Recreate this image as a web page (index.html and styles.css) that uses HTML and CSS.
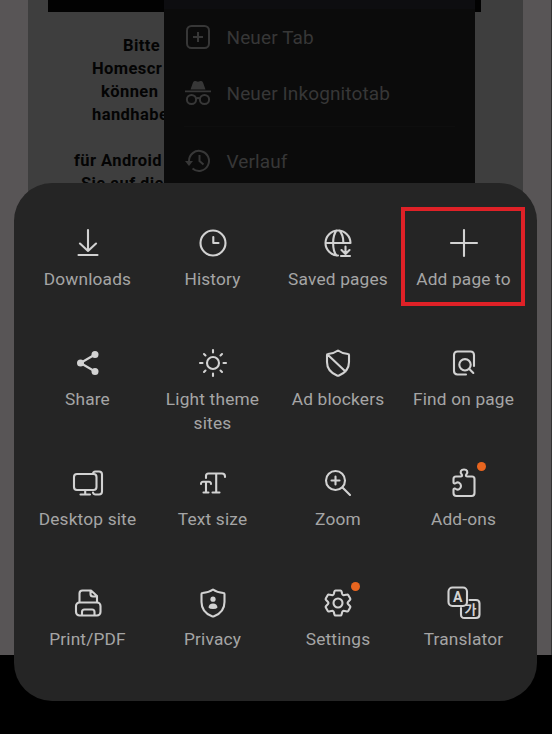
FILE: index.html
```html
<!DOCTYPE html>
<html lang="en">
<head>
<meta charset="utf-8">
<title>Browser menu</title>
<link rel="stylesheet" href="styles.css">
</head>
<body>
<div class="screen">
  <div class="backdrop">
    <div class="page">
      <div class="page-bar"></div>
      <div class="page-text">
        <p class="line-a">Bitte</p>
        <p class="line-b">Homescr</p>
        <p class="line-c">können</p>
        <p class="line-b">handhabe</p>
        <p class="line-d">für Android</p>
        <p class="line-e">Sie auf die</p>
      </div>
      <div class="popup">
        <div class="popup-head"></div>
        <div class="popup-row"><svg viewBox="0 0 28 28"><rect x="3" y="3" width="22" height="22" rx="4.500"/><path d="M14 9v10M9 14h10"/></svg>Neuer Tab</div>
        <div class="popup-row"><svg viewBox="0 0 28 28"><path class="solid" d="M6.500 10.500 9 3.500Q9.500 1.500 11.500 2L14 2.700 16.500 2Q18.500 1.500 19 3.500L21.500 10.500zM1 11.500h26v1.800H1z"/><circle cx="7.500" cy="20.500" r="4.600"/><circle cx="20.500" cy="20.500" r="4.600"/><path d="M12 19.500q2-1 4 0"/></svg>Neuer Inkognitotab</div>
        <div class="popup-row ruled"><svg viewBox="0 0 28 28"><path d="M5 14a10 10 0 1 1 3.500 7.500M15.500 8v6l4 3.500"/><path class="solid" d="M1 14h8l-4 5z"/></svg>Verlauf</div>
      </div>
    </div>
  </div>
  <main class="sheet">
    <div class="item"><svg class="icon" viewBox="-18 -18 36 36"><path d="M0-13V8M-8 .5 0 8 8 .5M-9.500 12H9.500"/></svg><span>Downloads</span></div>
    <div class="item"><svg class="icon" viewBox="-18 -18 36 36"><circle r="12.500"/><path d="M.3-6V0H5.500"/></svg><span>History</span></div>
    <div class="item"><svg class="icon" viewBox="-18 -18 36 36"><path d="M12.500 0A12.500 12.500 0 1 0 0 12.500M-12.500 0H12.500M-1.500-12.500C-6-7-6 7-1.500 12.500M1.500-12.500C4.500-9 5.500-5 5.300 0"/><path d="M7.500 3.500V11M3.500 7l4 4 4-4M3 13h9"/></svg><span>Saved pages</span></div>
    <div class="item"><i class="mark"></i><svg class="icon" viewBox="-18 -18 36 36"><path d="M0-13V13M-13 0H13"/></svg><span>Add page to</span></div>

    <div class="item"><svg class="icon" viewBox="-18 -18 36 36"><path d="M7-8.500-7.500 0 7 8.500"/><g class="solid"><circle cx="7" cy="-8.500" r="3.500"/><circle cx="-7.500" r="3.500"/><circle cx="7" cy="8.500" r="3.500"/></g></svg><span>Share</span></div>
    <div class="item"><svg class="icon" viewBox="-18 -18 36 36"><circle r="6"/><path d="M0-13v2.500M0 10.500V13M-13 0h2.500M10.500 0H13M-9-9l1.500 1.500M7.500 7.500 9 9M-9 9l1.500-1.500M7.500-7.500 9-9"/></svg><span>Light theme sites</span></div>
    <div class="item"><svg class="icon" viewBox="-18 -18 36 36"><path d="M0-12.500Q4-9.500 10-9Q11-9 11-8V-1C11 6 7 10 1 12.500Q0 13-1 12.500C-7 10-11 6-11-1V-8Q-11-9-10-9Q-4-9.500 0-12.500ZM-10-8 7.500 8.500"/></svg><span>Ad blockers</span></div>
    <div class="item"><svg class="icon" viewBox="-18 -18 36 36"><path d="M2 11.500H-6.500Q-10 11.500-10 8V-8Q-10-11.500-6.500-11.500H6.500Q10-11.500 10-8V3"/><circle cx="1" cy="1.800" r="5.700"/><path d="m5.300 6 4 4"/></svg><span>Find on page</span></div>

    <div class="item"><svg class="icon" viewBox="-18 -18 36 36"><rect x="-14" y="-9" width="22.500" height="16" rx="3"/><path d="M-2.800 7v4.500M-7.500 11.500H2M5-9Q5-11.500 7.500-11.500H11Q14-11.500 14-8.500V8.500Q14 11.500 11 11.500H7.500Q5.500 11.500 5 9.500"/></svg><span>Desktop site</span></div>
    <div class="item"><svg class="icon" viewBox="-18 -18 36 36"><path d="M-7-5V-7Q-7-9.500-4.500-9.500H9Q12-9.500 12-6.500V-6M3.200-9.500V9.500M-.5 9.500H6.500M-12 1Q-12-1.200-10-1.200H-4Q-2-1.200-2 1M-7-1V9.500M-9.500 9.500h5"/></svg><span>Text size</span></div>
    <div class="item"><svg class="icon" viewBox="-18 -18 36 36"><circle cx="-2.500" cy="-2.500" r="9.500"/><path d="M4.500 4.500 12 12M-2.500-6.500v8M-6.500-2.500h8"/></svg><span>Zoom</span></div>
    <div class="item"><svg class="icon" viewBox="-18 -18 36 36"><path d="M-8-6.500H-3.500C-2-6.500-1.500-7.500-2.300-8.500C-4.500-11-3-13.500 0-13.500S4.500-11 2.300-8.500C1.500-7.500 2-6.500 3.500-6.500H8Q10.500-6.500 10.500-4V10Q10.500 13 7.500 13H-7.500Q-10.500 13-10.500 10V6.500C-10.500 5.500-9 5.200-8 6C-6 7.500-3 6-3 3S-6-1.500-8 0C-9 .8-10.500.5-10.500-.5V-4Q-10.500-6.500-8-6.500Z"/></svg><i class="dot"></i><span>Add-ons</span></div>

    <div class="item"><svg class="icon" viewBox="-18 -18 36 36"><path d="M-8.500-1V-9.500Q-8.500-12.500-5.500-12.500H3L9-7V-1M2.500-12V-9Q2.500-6.500 5-6.500H9"/><rect x="-12" y="-.5" width="24.500" height="13" rx="3.500"/><path d="M-6 12V9Q-6 6.500-3.500 6.500H4Q6.500 6.500 6.500 9V12"/></svg><span>Print/PDF</span></div>
    <div class="item"><svg class="icon" viewBox="-18 -18 36 36"><path d="M0-13.500Q4-10.500 10.500-10Q11.500-10 11.500-9V-1C11.500 6.500 7 11 1 13.300Q0 13.700-1 13.300C-7 11-11.500 6.500-11.500-1V-9Q-11.500-10-10.500-10Q-4-10.500 0-13.500Z"/><circle class="solid" cy="-3.800" r="2.600"/><path class="solid" d="M-4.500 4.500Q-4 .5 0 .5T4.500 4.500Q3.500 6 0 6T-4.500 4.500Z"/></svg><span>Privacy</span></div>
    <div class="item"><svg class="icon" viewBox="-18 -18 36 36"><path d="M-2.500-12.500H2.500Q3.300-12.500 3.500-11.700L4.200-9Q4.500-8 5.600-7.800L9.100-8.500Q9.800-8.700 10.200-8L12.200-4.500Q12.600-3.800 12.100-3.200L9.800-.8Q9.300 0 9.800.8L12.100 3.200Q12.600 3.800 12.200 4.500L10.200 8Q9.800 8.700 9.100 8.500L5.600 7.800Q4.500 8 4.200 9L3.500 11.700Q3.300 12.500 2.500 12.500H-2.500Q-3.300 12.500-3.500 11.700L-4.200 9Q-4.500 8-5.600 7.800L-9.100 8.500Q-9.800 8.700-10.200 8L-12.200 4.500Q-12.600 3.800-12.100 3.200L-9.800.8Q-9.300 0-9.800-.8L-12.100-3.200Q-12.600-3.800-12.200-4.500L-10.200-8Q-9.800-8.700-9.100-8.500L-5.600-7.800Q-4.500-8-4.200-9L-3.500-11.700Q-3.300-12.500-2.500-12.500Z"/><circle r="4.500"/></svg><i class="dot"></i><span>Settings</span></div>
    <div class="item"><svg class="icon" viewBox="-18 -18 36 36"><rect x="-15.500" y="-15.500" width="18.500" height="18.500" rx="4"/><path d="M5.500-3H12Q15.500-3 15.500.5V11.500Q15.500 15 12 15H.5Q-3 15-3 11.500V5"/><text class="latin" x="-6.200" y="-1.300">A</text><text class="hangul" x="6.500" y="10.700">가</text></svg><span>Translator</span></div>
  </main>
</div>
</body>
</html>
```

FILE: styles.css
```css
* { box-sizing: border-box; }

body { margin: 0; background: #000; }

.screen {
  position: relative;
  width: 552px;
  height: 734px;
  overflow: hidden;
  background: #000;
  font-family: Roboto, "Liberation Sans", sans-serif;
}

.backdrop {
  height: 655px;
  padding: 0 28px;
  background: #585556;
  border-right: 1px solid #333;
}

.page {
  position: relative;
  height: 100%;
  padding-left: 20px;
  background: #3e3e3e;
}

.page-bar { width: 433px; height: 12px; background: #020202; }

.page-text {
  padding-top: 22px;
  font-size: 16.500px;
  font-weight: 700;
  line-height: 23px;
  letter-spacing: .42px;
  white-space: nowrap;
  color: #040404;
}

.page-text p { margin: 0; }
.page-text .line-a { padding-left: 75px; }
.page-text .line-b { padding-left: 44px; }
.page-text .line-c { padding-left: 53px; }
.page-text .line-d { padding-left: 26px; margin-top: 23px; }
.page-text .line-e { padding-left: 33px; }

.popup {
  position: absolute;
  top: 0;
  left: 135.500px;
  width: 311px;
  height: 200px;
  background: #0b0b0b;
  color: #373737;
}

.popup-head { height: 9px; background: #0d0d10; }

.popup-row {
  display: flex;
  align-items: center;
  gap: 15px;
  height: 56px;
  padding-left: 20px;
  font-size: 19px;
  letter-spacing: .12px;
}

.popup-row svg {
  width: 28px;
  height: 28px;
  fill: none;
  stroke: #373737;
  stroke-width: 2;
}

.popup-row.ruled {
  height: 70px;
  margin: 5px 20px 0;
  padding: 0 0 1px;
  border-top: 1px solid #0e0e0e;
}

.popup-row .solid { fill: #373737; stroke: none; }

.sheet {
  position: absolute;
  top: 183px;
  left: 14px;
  width: 523px;
  height: 517.500px;
  padding: 42px 11px 0;
  display: grid;
  grid-template-columns: 125px 125px 126px 125px;
  grid-auto-rows: 120px;
  border-radius: 38px;
  background: #252525;
}

.item {
  position: relative;
  display: flex;
  flex-direction: column;
  align-items: center;
  color: #a5a5a5;
  font-size: 17.300px;
  line-height: 24px;
  letter-spacing: .18px;
  text-align: center;
}

.item span { margin-top: 6px; max-width: 116px; }

.icon {
  width: 36px;
  height: 36px;
  fill: none;
  stroke: #d2d2d2;
  stroke-width: 2.100;
  stroke-linecap: round;
  stroke-linejoin: round;
}

.icon .solid { fill: #d2d2d2; stroke: none; }

.icon text {
  fill: #d2d2d2;
  stroke: none;
  text-anchor: middle;
  letter-spacing: 0;
}

.latin { font: 700 14px Roboto, sans-serif; }
.hangul { font: 700 13px "Noto Sans CJK KR", sans-serif; }

.dot {
  position: absolute;
  top: -3.500px;
  left: 75.500px;
  width: 9px;
  height: 9px;
  border-radius: 50%;
  background: #e8651f;
}

.mark {
  position: absolute;
  top: -18px;
  left: 0;
  width: 124px;
  height: 99px;
  border: 4px solid #df2127;
}
```
